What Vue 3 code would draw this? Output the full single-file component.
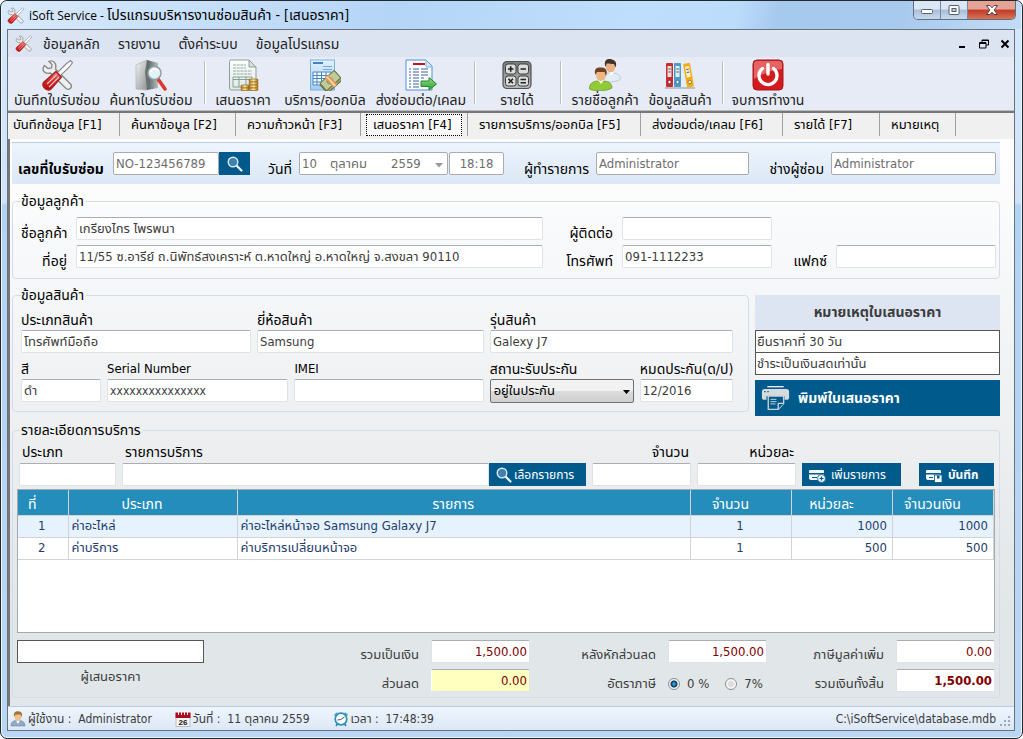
<script setup>
import { ref } from 'vue'

const menus = ['ข้อมูลหลัก', 'รายงาน', 'ตั้งค่าระบบ', 'ข้อมูลโปรแกรม']

const tools = [
  { icon: 'tools', label: 'บันทึกใบรับซ่อม' },
  { icon: 'search-folder', label: 'ค้นหาใบรับซ่อม' },
  { sep: true },
  { icon: 'quote', label: 'เสนอราคา' },
  { icon: 'invoice', label: 'บริการ/ออกบิล' },
  { icon: 'export', label: 'ส่งซ่อมต่อ/เคลม' },
  { sep: true },
  { icon: 'calc', label: 'รายได้' },
  { sep: true },
  { icon: 'users', label: 'รายชื่อลูกค้า' },
  { icon: 'binders', label: 'ข้อมูลสินค้า' },
  { sep: true },
  { icon: 'power', label: 'จบการทำงาน' },
]

const tabs = [
  'บันทึกข้อมูล [F1]',
  'ค้นหาข้อมูล [F2]',
  'ความก้าวหน้า [F3]',
  'เสนอราคา [F4]',
  'รายการบริการ/ออกบิล [F5]',
  'ส่งซ่อมต่อ/เคลม [F6]',
  'รายได้ [F7]',
  'หมายเหตุ',
]
const activeTab = ref(3)

const job = ref({ no: 'NO-123456789', day: '10', month: 'ตุลาคม', year: '2559', time: '18:18', clerk: 'Administrator', technician: 'Administrator' })
const customer = ref({ name: 'เกรียงไกร ไพรพนา', address: '11/55 ซ.อารีย์ ถ.นิพัทธ์สงเคราะห์ ต.หาดใหญ่ อ.หาดใหญ่ จ.สงขลา 90110', contact: '', phone: '091-1112233', fax: '' })
const product = ref({ type: 'โทรศัพท์มือถือ', brand: 'Samsung', model: 'Galexy J7', color: 'ดำ', serial: 'xxxxxxxxxxxxxxx', imei: '', warranty: 'อยู่ในประกัน', expires: '12/2016' })
const notes = ref(['ยืนราคาที่ 30 วัน', 'ชำระเป็นเงินสดเท่านั้น'])
const entry = ref({ type: '', service: '', qty: '', price: '' })
const rows = [
  { type: 'ค่าอะไหล่', item: 'ค่าอะไหล่หน้าจอ Samsung Galaxy J7', qty: 1, price: 1000, total: 1000 },
  { type: 'ค่าบริการ', item: 'ค่าบริการเปลี่ยนหน้าจอ', qty: 1, price: 500, total: 500 },
]
const sums = ref({ subtotal: '1,500.00', discount: '0.00', net: '1,500.00', vat: '0.00', total: '1,500.00' })
const quoter = ref('')
const taxRate = ref('0')
</script>

<template>
  <div class="window">
    <svg class="defs" aria-hidden="true">
      <defs>
        <linearGradient id="gRed" x1="0" y1="0" x2="0" y2="1"><stop offset="0" stop-color="#e88" /><stop offset=".5" stop-color="#d42424" /><stop offset="1" stop-color="#c00808" /></linearGradient>
        <linearGradient id="gSteel" x1="0" y1="0" x2="1" y2="1"><stop offset="0" stop-color="#f4f4f4" /><stop offset="1" stop-color="#8d9494" /></linearGradient>
        <linearGradient id="gDark" x1="0" y1="0" x2="1" y2="0"><stop offset="0" stop-color="#555f60" /><stop offset="1" stop-color="#b4bcbc" /></linearGradient>
        <linearGradient id="gGreen" x1="0" y1="0" x2="0" y2="1"><stop offset="0" stop-color="#9be08d" /><stop offset="1" stop-color="#259c2c" /></linearGradient>
        <linearGradient id="gGold" x1="0" y1="0" x2="1" y2="0"><stop offset="0" stop-color="#b78327" /><stop offset=".5" stop-color="#ffe69a" /><stop offset="1" stop-color="#a9711c" /></linearGradient>
        <linearGradient id="gPaper" x1="0" y1="0" x2="0" y2="1"><stop offset="0" stop-color="#fdfefd" /><stop offset="1" stop-color="#dfe9e5" /></linearGradient>
        <linearGradient id="gBlue" x1="0" y1="0" x2="0" y2="1"><stop offset="0" stop-color="#e2f1ff" /><stop offset="1" stop-color="#9fcbf2" /></linearGradient>
        <linearGradient id="gCalc" x1="0" y1="0" x2="0" y2="1"><stop offset="0" stop-color="#777a7a" /><stop offset="1" stop-color="#b9bbbb" /></linearGradient>
      </defs>
      <symbol id="tools" viewBox="0 0 32 32">
        <path d="M8 2.500 11 5.500 10.500 9 7 9.500 3.500 6.500C0 11 3.500 15.500 9.500 14L25 29.500C28.500 32 32 28 29.500 25L14.500 10C16 4 12 .5 8 2.500Z" fill="#efefef" stroke="#8a8a8a" stroke-width="1.400" />
        <path d="M29.500 1.500 31.500 3.500 28.500 8 19 17 16 14 25 5Z" fill="#fafafa" stroke="#8a8a8a" stroke-width="1.100" />
        <path d="M15 12.500 20.500 18 10 30C6.500 33 0 28 2.500 23.500Z" fill="url(#gRed)" stroke="#a32020" stroke-width="1.300" />
        <path d="M15.500 16 6 25M18 18 8 28" stroke="#ffc4c4" stroke-width="1.200" />
      </symbol>
      <symbol id="search-folder" viewBox="0 0 32 32">
        <path d="M1 6 12 1V31L1 30Z" fill="url(#gSteel)" stroke="#a5adad" stroke-width=".6" />
        <path d="M12 1 23 4V29L12 31Z" fill="url(#gDark)" />
        <path d="M12 1 10 13 12 31 15 23 13 13Z" fill="#687272" />
        <path d="M23 20 30 30" stroke="#d9382b" stroke-width="3.500" stroke-linecap="round" />
        <circle cx="19.500" cy="14" r="6.500" fill="#e2f3f8" stroke="#8fa0a5" stroke-width="1.500" />
        <path d="M15.500 13C17 9 21 9 23 12" fill="none" stroke="#fff" stroke-width="2" />
      </symbol>
      <symbol id="quote" viewBox="0 0 32 32">
        <path d="M4 1H22L29 8V31H4Q2.500 31 2.500 29V2.500Q2.500 1 4 1Z" fill="url(#gPaper)" stroke="#8ba39a" />
        <path d="M22 1V8H29Z" fill="#d5e1dc" stroke="#8ba39a" />
        <path d="M6 6H19M6 9H19M6 12H25M6 15H25" stroke="#96aaa2" stroke-dasharray="3 .7" />
        <path d="M6 18H25V28H6ZM6 20.500H25M12 18V28M19 18V28" fill="none" stroke="#86a097" />
        <g fill="url(#gGold)" stroke="#8a5c12" stroke-width=".6"><rect x="22" y="20" width="9" height="3" rx="1" /><rect x="22" y="23" width="9" height="3" rx="1" /><rect x="22" y="26" width="9" height="3" rx="1" /><rect x="22" y="29" width="9" height="2.500" rx="1" /><rect x="14" y="26" width="8" height="3" rx="1" /><rect x="14" y="29" width="8" height="2.500" rx="1" /></g>
      </symbol>
      <symbol id="invoice" viewBox="0 0 32 32">
        <rect x="1.500" y="1" width="24" height="30" fill="url(#gBlue)" stroke="#7eb0df" />
        <path d="M4 4H14" stroke="#4583bf" stroke-width="2" />
        <path d="M14 7.500H23M14 10.500H23" stroke="#78a8d6" />
        <path d="M4 13H22V26H4ZM4 16.500H22M4 19.500H22M4 23H22M8 13V26M12.500 13V26M17 13V26" fill="#f2f8ff" stroke="#4c86bf" />
        <g transform="rotate(-42 22 23)"><rect x="12" y="18" width="20" height="11" fill="#98a56c" stroke="#5c6940" /><rect x="13" y="16.500" width="19" height="10" fill="#c0cb98" stroke="#6d7a4c" /><circle cx="22" cy="21.500" r="3.500" fill="#8b9a60" /><path d="M20 16H25V29H20Z" fill="#e59a5c" /><path d="M22.500 16V29" stroke="#f7dcb6" stroke-width="1.500" /></g>
      </symbol>
      <symbol id="export" viewBox="0 0 32 32">
        <path d="M1 1H21L27 7V31H1Z" fill="#fbfdff" stroke="#4f8fcf" />
        <path d="M21 1V8H27" fill="#d4e5f6" stroke="#86b0dc" />
        <path d="M8 5H20" stroke="#b71927" stroke-width="2.200" />
        <path d="M4 10H6M8 10H14M16 10H23M4 13H6M8 13H14M16 13H23M4 16H6M8 16H14M16 16H23M4 19H6M8 19H14M4 22H6M8 22H14M4 25H6M8 25H14M4 28H6M8 28H14M16 19H19" stroke="#42659b" stroke-width="1.200" />
        <path d="M16 22H24V18.500L31.500 25 24 31V27.500H16Z" fill="url(#gGreen)" stroke="#278332" />
      </symbol>
      <symbol id="calc" viewBox="0 0 32 32">
        <rect x="2" y="2.500" width="28" height="27" rx="4" fill="url(#gCalc)" stroke="#505252" stroke-width="1.200" />
        <g fill="#dcdddd" stroke="#3c3d3d" stroke-width="1"><rect x="4.500" y="5" width="10.500" height="10" rx="2.500" /><rect x="17" y="5" width="10.500" height="10" rx="2.500" /><rect x="4.500" y="17" width="10.500" height="10" rx="2.500" /><rect x="17" y="17" width="10.500" height="10" rx="2.500" /></g>
        <path d="M7 10H12.500M9.700 7.200V12.800M19.500 10H25M7.500 19.800 12 24.300M12 19.800 7.500 24.300M19.500 20.500H25M19.500 23.800H25" stroke="#222" stroke-width="1.600" />
      </symbol>
      <symbol id="users" viewBox="0 0 32 32">
        <path d="M13 22C12 15 18 14 22 14S32 15 31.500 20C29 23 17 24 13 22Z" fill="#e3edf5" stroke="#aebfce" stroke-width=".7" />
        <path d="M20 13 22 17 25 13Z" fill="#fff" />
        <ellipse cx="21.500" cy="7.500" rx="4.700" ry="6" fill="#e9b184" />
        <path d="M16.500 8C14 1 19-1 23 .5S28 4 26.500 8.500L25 5C21 5 18 4 17.500 5Z" fill="#453328" />
        <path d="M.5 30C0 23 6 22 11 22S23 22 23 29C18 32.500 4 32.500 .5 30Z" fill="#92cb38" stroke="#639522" stroke-width=".7" />
        <path d="M9 21 12 25 15 21Z" fill="#fff" />
        <ellipse cx="12" cy="16" rx="5" ry="6" fill="#edb782" />
        <path d="M6.500 16C4 9 9 8 13 8.500S19 12 17 17L15.500 13 8 13Z" fill="#714324" />
      </symbol>
      <symbol id="binders" viewBox="0 0 32 32">
        <path d="M1 29H31" stroke="#b8c0c8" stroke-width="2" />
        <g transform="translate(2 4)"><rect width="7" height="24" rx="1" fill="#c92b2e" /><rect x="1.500" y="3" width="4" height="11" fill="#f0dede" /><path d="M2.300 6H4.800M2.300 9H4.800" stroke="#555" /><circle cx="3.500" cy="19" r="1.700" fill="#fff" stroke="#7b1a1c" stroke-width=".8" /></g>
        <g transform="translate(10 4)"><rect width="7" height="24" rx="1" fill="#4b9dc9" /><rect x="1.500" y="3" width="4" height="11" fill="#e1edf4" /><path d="M2.300 6H4.800M2.300 9H4.800" stroke="#555" /><circle cx="3.500" cy="19" r="1.700" fill="#fff" stroke="#20638a" stroke-width=".8" /></g>
        <g transform="translate(19 5) rotate(-10)"><rect width="7" height="24" rx="1" fill="#f2ad16" /><rect x="1.500" y="3" width="4" height="11" fill="#fbf0d6" /><path d="M2.300 6H4.800M2.300 9H4.800" stroke="#555" /><circle cx="3.500" cy="19" r="1.700" fill="#fff" stroke="#996708" stroke-width=".8" /></g>
      </symbol>
      <symbol id="power" viewBox="0 0 32 32">
        <rect x="1" y="1" width="30" height="30" rx="4" fill="#d31a1d" stroke="#a51a1c" />
        <path d="M5 2H27Q30 2 30 5V10Q17 11 2 20V5Q2 2 5 2Z" fill="#f08a8a" opacity=".65" />
        <path d="M10.500 9.500A9 9 0 1 0 21.500 9.500" fill="none" stroke="#fff" stroke-width="3.400" stroke-linecap="round" />
        <path d="M16 5.500V15" stroke="#fff" stroke-width="3.400" stroke-linecap="round" />
      </symbol>
      <symbol id="magnifier" viewBox="0 0 16 16">
        <path d="M9.500 9.500 14.500 14.500" stroke="#f2f6fa" stroke-width="2.200" stroke-linecap="round" />
        <circle cx="6" cy="6" r="4.800" fill="#3f82b0" stroke="#dce8f1" stroke-width="1.400" />
      </symbol>
      <symbol id="printer" viewBox="0 0 32 28">
        <path d="M7 1.500H25" stroke="#e8eef2" stroke-width="1.500" />
        <path d="M4 4H28Q31 4 31 7V14Q31 16 29 16H26V12H6V16H3Q1 16 1 14V7Q1 4 4 4Z" fill="#d5dadd" />
        <path d="M3.500 7H5M7 7H8.500" stroke="#005b8c" stroke-width="1.500" />
        <path d="M8 12H25V20L19 26.500H8Z" fill="#005b8c" stroke="#c9d1d6" stroke-width="1.500" />
        <path d="M19 26V20H25" fill="#005b8c" stroke="#c9d1d6" stroke-width="1.500" />
        <path d="M10.500 15.500H17M10.500 18H17M10.500 20.500H16" stroke="#d5dde2" />
      </symbol>
      <symbol id="card-add" viewBox="0 0 18 14">
        <path d="M1 1H14Q15 1 15 2V4H0V2Q0 1 1 1ZM0 5.500H15V11H2Q0 11 0 9Z" fill="#f4f8fb" />
        <path d="M3 8.500H8" stroke="#005b8c" />
        <circle cx="12.500" cy="9.500" r="4" fill="#f4f8fb" stroke="#005b8c" stroke-width=".8" />
        <path d="M10.500 9.500H14.500M12.500 7.500V11.500" stroke="#005b8c" stroke-width="1.200" />
      </symbol>
      <symbol id="card-save" viewBox="0 0 18 14">
        <path d="M1 1H14Q15 1 15 2V4H0V2Q0 1 1 1ZM0 5.500H15V11H2Q0 11 0 9Z" fill="#f4f8fb" />
        <path d="M3 8.500H7" stroke="#005b8c" />
        <rect x="8.500" y="6" width="7.500" height="7.500" fill="#f4f8fb" stroke="#005b8c" stroke-width=".8" />
        <path d="M11 6.500H13.500V9.500H11Z" fill="#005b8c" />
      </symbol>
      <symbol id="person" viewBox="0 0 14 16">
        <path d="M0 15C0 10 3 9.500 7 9.500S14 10.500 14 15Z" fill="#8eabc9" stroke="#5e7b9c" stroke-width=".5" />
        <path d="M5 9.500 7 13 9 9.500Z" fill="#fff" />
        <ellipse cx="7" cy="5.500" rx="3.400" ry="4.300" fill="#efc191" />
        <path d="M3.200 6C2 1 5 0 7.500 .3S12 2 10.800 6L9.500 3.500 4.500 3.500Z" fill="#a1742f" />
      </symbol>
      <symbol id="clock" viewBox="0 0 16 16">
        <path d="M3 15 5 12M13 15 11 12" stroke="#2d7da0" stroke-width="1.500" />
        <path d="M1.500 4.500 4.500 2M14.500 4.500 11.500 2" stroke="#5ba9c6" stroke-width="2" />
        <circle cx="8" cy="8" r="5.800" fill="#f8fdff" stroke="#2d8fb9" stroke-width="1.700" />
        <path d="M4.500 9 7.800 8.500 11.500 6" fill="none" stroke="#43586a" />
      </symbol>
    </svg>

    <header class="titlebar">
      <svg class="app-icon"><use href="#tools" /></svg>
      <h1><span class="brand">iSoft Service - </span>โปรแกรมบริหารงานซ่อมสินค้า - [เสนอราคา]</h1>
      <div class="caption-buttons">
        <button type="button" aria-label="Minimize"><svg viewBox="0 0 14 10"><rect x="1.500" y="4.500" width="11" height="4" rx="1" fill="#fff" stroke="#555f6e" /></svg></button>
        <button type="button" aria-label="Maximize"><svg viewBox="0 0 14 10"><rect x="2" y=".5" width="10" height="9" rx="1" fill="#fff" stroke="#555f6e" /><rect x="5" y="3.500" width="4" height="3" fill="#b8c9dd" stroke="#555f6e" /></svg></button>
        <button type="button" class="close" aria-label="Close"><svg viewBox="0 0 14 10"><path d="M1.500 .5H5L7 2.800 9 .5H12.500L9.200 5 12.500 9.500H9L7 7.200 5 9.500H1.500L4.800 5Z" fill="#fff" stroke="#5a3a44" /></svg></button>
      </div>
    </header>

    <div class="client">
      <nav class="menubar">
        <svg class="app-icon"><use href="#tools" /></svg>
        <a v-for="m in menus" :key="m" href="#">{{ m }}</a>
        <div class="mdi">
          <button type="button" aria-label="Minimize document"><svg viewBox="0 0 10 10"><path d="M1 8H7" stroke="#000" stroke-width="2" /></svg></button>
          <button type="button" aria-label="Restore document"><svg viewBox="0 0 10 10"><path d="M3 3V1H9.500V6H7M3 1.500H9.500" fill="none" stroke="#000" /><path d="M.5 3.500H7V9H.5ZM.5 4.500H7" fill="none" stroke="#000" /></svg></button>
          <button type="button" aria-label="Close document"><svg viewBox="0 0 10 10"><path d="M1.500 1.500 8.500 8.500M8.500 1.500 1.500 8.500" stroke="#000" stroke-width="2" /></svg></button>
        </div>
      </nav>

      <div class="toolbar">
        <template v-for="(t, i) in tools" :key="i">
          <span v-if="t.sep" class="sep"></span>
          <button v-else type="button"><svg><use :href="'#' + t.icon" /></svg><span>{{ t.label }}</span></button>
        </template>
      </div>

      <div class="tabs" role="tablist">
        <button v-for="(t, i) in tabs" :key="t" type="button" role="tab" :aria-selected="i === activeTab" :class="{ active: i === activeTab }" @click="activeTab = i"><span>{{ t }}</span></button>
      </div>

      <main>
        <section class="job">
          <label class="strong" for="jobNo">เลขที่ใบรับซ่อม</label>
          <div class="joined">
            <input id="jobNo" v-model="job.no" />
            <button type="button" class="blue" aria-label="ค้นหา"><svg class="i16"><use href="#magnifier" /></svg></button>
          </div>
          <label for="jobDay">วันที่</label>
          <div class="date">
            <input id="jobDay" v-model="job.day" class="day" />
            <input v-model="job.month" class="month" aria-label="เดือน" />
            <input v-model="job.year" class="year" aria-label="ปี" />
            <button type="button" aria-label="เลือกวันที่"><svg viewBox="0 0 8 5"><path d="M0 0H8L4 4.500Z" fill="#999" /></svg></button>
          </div>
          <input v-model="job.time" class="time" aria-label="เวลา" />
          <label for="clerk">ผู้ทำรายการ</label>
          <input id="clerk" v-model="job.clerk" />
          <label for="tech">ช่างผู้ซ่อม</label>
          <input id="tech" v-model="job.technician" />
        </section>

        <fieldset class="customer">
          <legend>ข้อมูลลูกค้า</legend>
          <div class="customer-grid">
            <label for="cName">ชื่อลูกค้า</label><input id="cName" v-model="customer.name" />
            <label for="cContact">ผู้ติดต่อ</label><input id="cContact" v-model="customer.contact" />
            <span></span><span></span>
            <label for="cAddr">ที่อยู่</label><input id="cAddr" v-model="customer.address" />
            <label for="cPhone">โทรศัพท์</label><input id="cPhone" v-model="customer.phone" />
            <label for="cFax">แฟกซ์</label><input id="cFax" v-model="customer.fax" />
          </div>
        </fieldset>

        <div class="middle">
          <fieldset class="product">
            <legend>ข้อมูลสินค้า</legend>
            <div class="product-row first">
              <div class="field"><label for="pType">ประเภทสินค้า</label><input id="pType" v-model="product.type" /></div>
              <div class="field"><label for="pBrand">ยี่ห้อสินค้า</label><input id="pBrand" v-model="product.brand" /></div>
              <div class="field"><label for="pModel">รุ่นสินค้า</label><input id="pModel" v-model="product.model" /></div>
            </div>
            <div class="product-row second">
              <div class="field"><label for="pColor">สี</label><input id="pColor" v-model="product.color" /></div>
              <div class="field"><label for="pSerial" class="latin">Serial Number</label><input id="pSerial" v-model="product.serial" class="serial" /></div>
              <div class="field"><label for="pImei" class="latin">IMEI</label><input id="pImei" v-model="product.imei" /></div>
              <div class="field">
                <label for="pWarranty">สถานะรับประกัน</label>
                <div class="select">
                  <select id="pWarranty" v-model="product.warranty"><option>อยู่ในประกัน</option></select>
                  <svg viewBox="0 0 7 4"><path d="M0 0H7L3.500 4Z" /></svg>
                </div>
              </div>
              <div class="field"><label for="pExp">หมดประกัน(ด/ป)</label><input id="pExp" v-model="product.expires" /></div>
            </div>
          </fieldset>

          <aside>
            <h2>หมายเหตุใบเสนอราคา</h2>
            <input v-for="(n, i) in notes" :key="i" v-model="notes[i]" class="outlined" :aria-label="'หมายเหตุ ' + (i + 1)" />
            <button type="button" class="blue print"><svg><use href="#printer" /></svg>พิมพ์ใบเสนอราคา</button>
          </aside>
        </div>

        <fieldset class="service">
          <legend>รายละเอียดการบริการ</legend>
          <div class="entry">
            <div class="field"><label for="eType">ประเภท</label><input id="eType" v-model="entry.type" /></div>
            <div class="field"><label for="eService">รายการบริการ</label>
              <div class="joined"><input id="eService" v-model="entry.service" /><button type="button" class="blue pick"><svg class="i16"><use href="#magnifier" /></svg>เลือกรายการ</button></div>
            </div>
            <div class="field right"><label for="eQty">จำนวน</label><input id="eQty" v-model="entry.qty" /></div>
            <div class="field right"><label for="ePrice">หน่วยละ</label><input id="ePrice" v-model="entry.price" /></div>
            <button type="button" class="blue add"><svg class="card"><use href="#card-add" /></svg>เพิ่มรายการ</button>
            <button type="button" class="blue save"><svg class="card"><use href="#card-save" /></svg>บันทึก</button>
          </div>

          <div class="grid-box">
            <table>
              <colgroup><col class="c1" /><col class="c2" /><col /><col class="c4" /><col class="c4" /><col class="c4" /></colgroup>
              <thead><tr><th>ที่</th><th>ประเภท</th><th>รายการ</th><th>จำนวน</th><th>หน่วยละ</th><th>จำนวนเงิน</th></tr></thead>
              <tbody>
                <tr v-for="(r, i) in rows" :key="i">
                  <td class="c">{{ i + 1 }}</td><td>{{ r.type }}</td><td>{{ r.item }}</td><td class="c">{{ r.qty }}</td><td class="r">{{ r.price }}</td><td class="r">{{ r.total }}</td>
                </tr>
              </tbody>
            </table>
          </div>

          <div class="summary">
            <div class="signer"><input id="quoter" v-model="quoter" class="outlined" /><label for="quoter">ผู้เสนอราคา</label></div>
            <label for="sSub">รวมเป็นเงิน</label><input id="sSub" v-model="sums.subtotal" />
            <label for="sNet">หลังหักส่วนลด</label><input id="sNet" v-model="sums.net" />
            <label for="sVat">ภาษีมูลค่าเพิ่ม</label><input id="sVat" v-model="sums.vat" />
            <label for="sDisc">ส่วนลด</label><input id="sDisc" v-model="sums.discount" class="yellow" />
            <span class="lbl">อัตราภาษี</span>
            <div class="radios">
              <label><input v-model="taxRate" type="radio" name="tax" value="0" />0 %</label>
              <label><input v-model="taxRate" type="radio" name="tax" value="7" />7%</label>
            </div>
            <label for="sTotal">รวมเงินทั้งสิ้น</label><input id="sTotal" v-model="sums.total" class="strong" />
          </div>
        </fieldset>
      </main>

      <footer>
        <span><svg class="i16"><use href="#person" /></svg>ผู้ใช้งาน :&nbsp; Administrator</span>
        <span>
          <svg class="i16" viewBox="0 0 16 16">
            <rect x="1" y="3" width="14" height="12.500" fill="#f8f8f8" stroke="#aaa" stroke-width=".7" />
            <rect x=".5" y="1.500" width="15" height="5.500" fill="#a90f1b" />
            <path d="M3.500 0V4M6.500 0V4M9.500 0V4M12.500 0V4" stroke="#fff" stroke-width=".9" />
            <text x="8" y="13.800" text-anchor="middle" font-size="8" font-weight="bold" font-family="Liberation Sans, sans-serif" fill="#111">26</text>
          </svg>วันที่ :&nbsp; 11 ตุลาคม 2559</span>
        <span><svg class="i16"><use href="#clock" /></svg>เวลา :&nbsp; 17:48:39</span>
        <span class="path">C:\iSoftService\database.mdb</span>
        <svg class="grip" viewBox="0 0 12 12"><path d="M8 0H10V2H8ZM8 4H10V6H8ZM8 8H10V10H8ZM4 4H6V6H4ZM4 8H6V10H4ZM0 8H2V10H0Z" fill="#a3a9b3" /></svg>
      </footer>
    </div>
  </div>
</template>

<style>
body {
  background: #fff;
}
</style>

<style scoped>
.window {
  box-sizing: border-box;
  height: 100vh;
  min-height: 720px;
  display: flex;
  flex-direction: column;
  padding: 0 7px 7px 6px;
  border: 1px solid #23272e;
  border-radius: 7px;
  background: linear-gradient(180deg, #d6e8fa 0, #cfe2f7 202px, #b3d3f3 204px, #b9d7f5 100%);
  box-shadow: inset 0 0 0 1px #e8f6ff;
  font: 13px/16px "DejaVu Sans Condensed", "Noto Sans Thai", "Noto Sans", sans-serif;
  color: #000;
  overflow: hidden;
}
.defs { position: absolute; width: 0; height: 0; }
button, input, select { font: inherit; color: inherit; box-sizing: border-box; }
button { padding: 0; border: 0; background: none; }
svg { flex: none; }
.i16 { width: 16px; height: 16px; }
.app-icon { width: 17px; height: 17px; }

.titlebar {
  height: 28px;
  flex: none;
  display: flex;
  align-items: center;
  gap: 5px;
  margin: 0 -6px 0 -5px;
  padding-left: 5px;
  border-radius: 6px 6px 0 0;
  background: linear-gradient(100deg, #d9eafb 0, #b5d5f7 38%, #bfdefc 62%, #bcdcfb 72%, #a6c9ee 76%, #a8caee 88%, #c3dcf5 100%);
}
h1 { margin: 0; flex: 1; font-size: 14px; font-weight: normal; white-space: nowrap; }
.brand { font-family: "Open Sans", sans-serif; font-size: 12px; white-space: pre; }
.caption-buttons {
  display: flex;
  align-self: flex-start;
  margin-right: 5px;
  border: 1px solid #5c6f86;
  border-top: 0;
  border-radius: 0 0 5px 5px;
  overflow: hidden;
}
.caption-buttons button {
  width: 27px;
  height: 18px;
  display: grid;
  place-items: center;
  border-right: 1px solid #7688a0;
  background: linear-gradient(#dbe7f4 0 45%, #a9bdd5 50%, #c7daef);
}
.caption-buttons button.close { width: 47px; border: 0; background: linear-gradient(#e5a396 0 45%, #c03a27 50%, #d97354); }
.caption-buttons svg { width: 14px; height: 10px; }

.client {
  flex: 1;
  min-height: 0;
  display: flex;
  flex-direction: column;
  border: 1px solid #68727f;
  background: #f0f0f0;
}
.menubar {
  height: 27px;
  flex: none;
  display: flex;
  align-items: center;
  padding: 0 4px 0 7px;
  background: #dce4f2;
}
.menubar .app-icon { margin-right: 11px; }
.menubar a { margin-right: 18px; color: #222; text-decoration: none; font-size: 14px; }
.mdi { display: flex; gap: 11px; margin-left: auto; }
.mdi button, .mdi svg { display: block; width: 10px; height: 10px; }

.toolbar {
  flex: none;
  display: grid;
  grid-template-columns: 94px 94px 14px 62px 102px 90px 18px 66px 22px 66px 84px 2px 88px;
  height: 54px;
  padding-left: 2px;
  background: #e6ebf5;
  border-bottom: 1px solid #bbb;
  box-sizing: border-box;
}
.toolbar button {
  display: flex;
  flex-direction: column;
  align-items: center;
  gap: 1px;
  padding-top: 2px;
  color: #222;
  font-size: 14px;
  white-space: nowrap;
}
.toolbar svg { width: 32px; height: 32px; }
.toolbar .sep { width: 1px; height: 43px; margin: 4px auto 0; background: #b9bcc0; border-right: 1px solid #fff; }

.tabs {
  flex: none;
  display: grid;
  grid-template-columns: 112px 116px 125px 107px 173px 142px 97px 76px;
  height: 28px;
  box-sizing: border-box;
  border-top: 2px solid #777;
}
.tabs button { height: 23px; padding-left: 11px; border-right: 1px solid #a0a0a0; text-align: left; white-space: nowrap; }
.tabs button:first-child { padding-left: 5px; }
.tabs button.active { padding: 0 5px; }
.tabs button.active span { display: block; box-sizing: border-box; height: 22px; padding: 2px 0 0 6px; border: 1px dotted #000; background: #f8f8f8; }

main {
  flex: 1;
  min-height: 0;
  display: flex;
  flex-direction: column;
  padding: 3px 14px 8px 2px;
  border-left: 2px solid #777;
  background: linear-gradient(#fff, #f6f7f9 25%, #eceef0 55%, #e1e6e8 85%);
}
input {
  width: 100%;
  min-width: 0;
  height: 23px;
  padding: 0 2px;
  border: 1px solid #dfe2e9;
  border-top-color: #abadb3;
  border-radius: 2px;
  background: #fff;
  color: #3c3c3c;
  outline: 0;
}
label { white-space: nowrap; }
.strong { font-weight: bold; }
.blue { background: #005b8c; color: #fff; white-space: nowrap; }
.joined { display: flex; }
.outlined { border: 1px solid #555; border-radius: 0; padding-left: 1px; }

.job {
  flex: none;
  display: grid;
  grid-template-columns: 90px 144px 49px 149px 56px 92px 153fr 82px 165fr;
  box-sizing: border-box;
  height: 42px;
  padding: 9px 4px 0;
  background: linear-gradient(#edf4fd, #dce8f6);
  border-top: 1px solid #b9cce3;
}
.job > label { padding-top: 9px; font-size: 14px; }
.job > label.strong { padding-left: 2px; }
.job > label:not(.strong) { text-align: right; padding-right: 7px; }
.job input, .date { border-color: #a9abae; color: #6d6d6d; }
.job .joined { margin-left: 7px; }
.job .joined .blue { width: 31px; flex: none; display: grid; place-items: center; height: 23px; }
.job .time { width: auto; margin-left: 1px; text-align: center; }
.date { display: flex; box-sizing: border-box; height: 23px; border: 1px solid #a9abae; border-radius: 2px; background: #fff; }
.date input { flex: none; border: 0; height: 21px; }
.date .day { width: 28px; }
.date .month { width: 61px; }
.date .year { width: 42px; }
.date button { width: 16px; }
.date svg { width: 8px; height: 5px; }

fieldset {
  min-width: 0;
  margin: 9px 0 0;
  padding: 0 3px 10px 8px;
  border: 1px solid #d3dce8;
  border-radius: 4px;
}
legend { padding: 0 2px 0 0; font-size: 14px; line-height: 16px; }
.customer { flex: none; }
.customer-grid {
  display: grid;
  grid-template-columns: 55px 467fr 79px 150px 64px 160px;
  row-gap: 5px;
  padding-top: 8px;
}
.customer-grid label { text-align: right; padding: 9px 9px 0 0; line-height: 14px; font-size: 14px; }

.middle { flex: none; display: flex; gap: 6px; margin-top: 8px; align-items: flex-start; }
.product { flex: 1; margin: 0; padding: 0 15px 9px 8px; }
.field { display: flex; flex-direction: column; gap: 2px; min-width: 0; }
.field label { font-size: 14px; }
.field label.latin { font-size: 13px; }
.product-row { display: grid; gap: 6px; }
.product-row.first { grid-template-columns: 230fr 227fr 243fr; padding-top: 9px; }
.product-row.second { grid-template-columns: 80fr 181fr 189fr 144fr 93fr; padding-top: 8px; }
.serial { font-size: 12px; }
.select { position: relative; height: 23px; }
.select select {
  width: 100%;
  height: 24px;
  padding: 0 3px;
  appearance: none;
  border: 1px solid #707070;
  border-radius: 2px;
  background: linear-gradient(#f2f2f2 0 48%, #dcdcdc 52%, #cfcfcf);
}
.select svg { position: absolute; right: 4px; top: 11px; width: 7px; height: 4px; pointer-events: none; }

aside { width: 245px; display: flex; flex-direction: column; padding-top: 8px; }
h2 { margin: 0; height: 35px; line-height: 34px; text-align: center; font-size: 14px; color: #3c3c3c; background: #dde5f3; }
aside .outlined + .outlined { margin-top: -1px; }
.print { display: flex; align-items: center; gap: 8px; height: 36px; margin-top: 5px; padding-left: 6px; font-weight: bold; font-size: 14px; }
.print svg { width: 29px; height: 26px; }

.service { flex: 1; display: flex; flex-direction: column; min-height: 0; margin-top: 6px; padding: 0 4px 5px; }
.service legend { margin-left: 4px; }
.entry {
  display: grid;
  grid-template-columns: 97fr 464fr 99fr 99fr 99px 87px;
  gap: 6px;
  align-items: end;
  padding: 6px 1px 3px 2px;
}
.entry .field { gap: 3px; }
.entry .field label { padding-left: 3px; }
.entry .right label { text-align: right; padding-right: 2px; }
.entry .blue { display: flex; align-items: center; height: 23px; gap: 4px; padding-left: 7px; font-size: 12px; }
.entry .pick { flex: none; width: 97px; gap: 2px; }
.entry .save { margin-left: 12px; font-weight: bold; }
.card { width: 18px; height: 14px; margin-top: 3px; }

.grid-box { flex: 1; min-height: 0; border: 1px solid #a5a9ae; background: #fff; overflow: hidden; }
table { width: 100%; table-layout: fixed; border-collapse: collapse; }
.c1 { width: 50px; }
.c2 { width: 169px; }
.c4 { width: 101px; }
th, td { box-sizing: border-box; padding: 0 5px 0 3px; border-right: 1px solid #d3d3d3; border-bottom: 1px solid #d3d3d3; text-align: left; white-space: nowrap; color: #1f3d6e; }
th { height: 25px; padding: 3px 24px 0 3px; background: #258dbc; color: #fff; font-size: 14px; font-weight: normal; text-align: center; }
td { height: 22px; }
tbody tr:first-child { background: #e6f3fe; }
td.c { text-align: center; }
td.r { text-align: right; }

.summary {
  display: grid;
  grid-template-columns: 187fr 227fr 99px 138fr 99px 129fr 99px;
  row-gap: 6px;
  padding-top: 7px;
  color: #3c3c3c;
}
.summary > label, .lbl { text-align: right; padding: 7px 12px 0 0; white-space: nowrap; line-height: 15px; }
.summary > input { color: #800000; text-align: right; padding-right: 2px; }
.summary .yellow { background: #ffffc0; border-left-color: #fff; }
.signer { grid-row: span 2; display: flex; flex-direction: column; gap: 6px; text-align: center; }
.radios { display: flex; align-items: center; gap: 16px; padding-top: 6px; white-space: nowrap; }
.radios label { display: flex; align-items: center; gap: 7px; }
.radios input {
  appearance: none;
  flex: none;
  width: 12px;
  height: 12px;
  margin: 0;
  padding: 0;
  border: 1px solid #8e8f8f;
  border-radius: 50%;
  background: radial-gradient(#ddd 35%, #f8f8f8 55%);
}
.radios input:checked { background: radial-gradient(circle, #2b9bd4 0 1px, #0b3355 3px, #f4f4f4 4px); }

footer {
  height: 23px;
  flex: none;
  display: flex;
  align-items: center;
  padding: 0 2px;
  border-top: 1px solid #b9cce3;
  background: linear-gradient(#eef5fe, #dce8f6);
  color: #3c3c3c;
  font-size: 12px;
  white-space: nowrap;
}
footer span { display: flex; align-items: center; gap: 2px; margin-right: 23px; }
footer .path { margin: 0 0 0 auto; }
.grip { width: 12px; height: 12px; margin: 6px 0 0 4px; }
</style>
